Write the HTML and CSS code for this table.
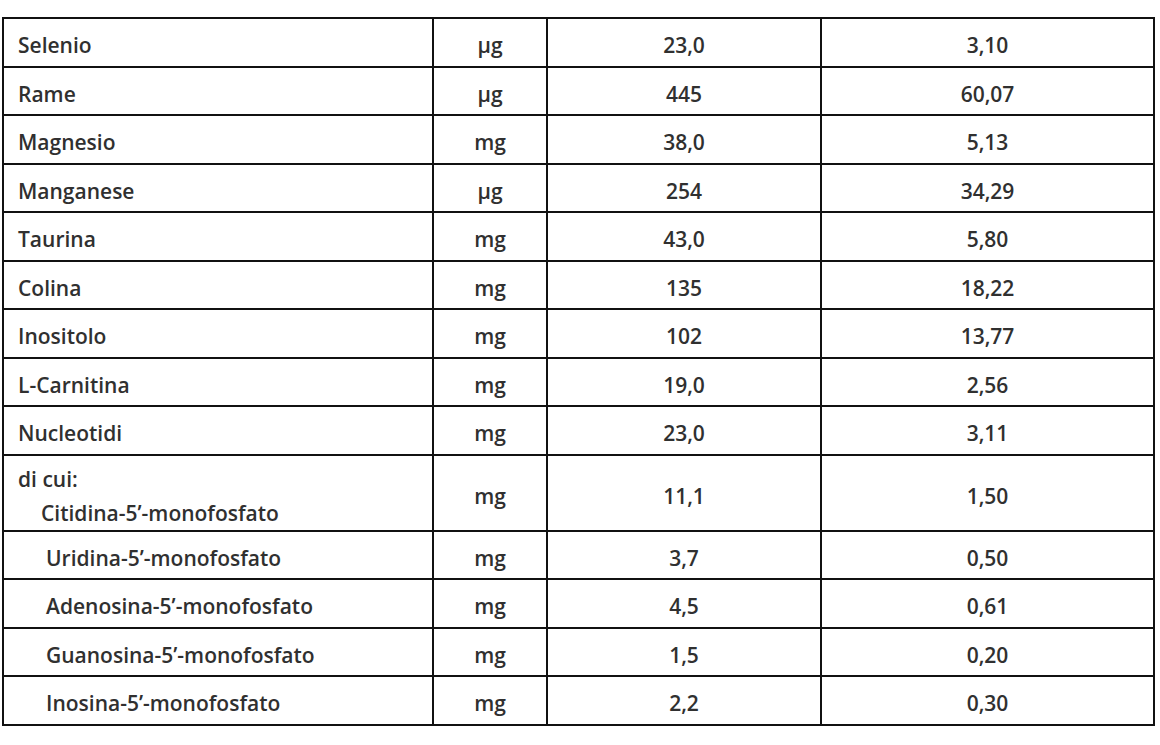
FILE: index.html
```html
<!DOCTYPE html>
<html lang="it">
<head>
<meta charset="utf-8">
<title>Tabella nutrizionale</title>
<link rel="stylesheet" href="styles.css">
</head>
<body>
<table class="nutri">
  <colgroup>
    <col class="c-name">
    <col class="c-unit">
    <col class="c-val">
    <col class="c-val2">
  </colgroup>
  <tbody>
    <tr><td class="name">Selenio</td><td class="num">µg</td><td class="num">23,0</td><td class="num">3,10</td></tr>
    <tr><td class="name">Rame</td><td class="num">µg</td><td class="num">445</td><td class="num">60,07</td></tr>
    <tr><td class="name">Magnesio</td><td class="num">mg</td><td class="num">38,0</td><td class="num">5,13</td></tr>
    <tr><td class="name">Manganese</td><td class="num">µg</td><td class="num">254</td><td class="num">34,29</td></tr>
    <tr><td class="name">Taurina</td><td class="num">mg</td><td class="num">43,0</td><td class="num">5,80</td></tr>
    <tr><td class="name">Colina</td><td class="num">mg</td><td class="num">135</td><td class="num">18,22</td></tr>
    <tr><td class="name">Inositolo</td><td class="num">mg</td><td class="num">102</td><td class="num">13,77</td></tr>
    <tr><td class="name">L-Carnitina</td><td class="num">mg</td><td class="num">19,0</td><td class="num">2,56</td></tr>
    <tr><td class="name">Nucleotidi</td><td class="num">mg</td><td class="num">23,0</td><td class="num">3,11</td></tr>
    <tr class="double">
      <td class="name"><div class="line">di cui:</div><div class="line sub-first">Citidina-5’-monofosfato</div></td>
      <td class="num">mg</td><td class="num">11,1</td><td class="num">1,50</td>
    </tr>
    <tr><td class="name sub">Uridina-5’-monofosfato</td><td class="num">mg</td><td class="num">3,7</td><td class="num">0,50</td></tr>
    <tr><td class="name sub">Adenosina-5’-monofosfato</td><td class="num">mg</td><td class="num">4,5</td><td class="num">0,61</td></tr>
    <tr><td class="name sub">Guanosina-5’-monofosfato</td><td class="num">mg</td><td class="num">1,5</td><td class="num">0,20</td></tr>
    <tr><td class="name sub">Inosina-5’-monofosfato</td><td class="num">mg</td><td class="num">2,2</td><td class="num">0,30</td></tr>
  </tbody>
</table>
</body>
</html>
```
FILE: styles.css
```css
html, body {
  margin: 0;
  padding: 0;
  background: #ffffff;
}

body {
  font-family: "Open Sans", "Noto Sans", sans-serif;
  font-size: 21px;
  font-weight: 600;
  color: #303030;
}

.nutri {
  border-collapse: collapse;
  table-layout: fixed;
  width: 1151px;
  margin: 17px 0 0 2px;
}

.c-name { width: 430px; }
.c-unit { width: 114px; }
.c-val { width: 274px; }
.c-val2 { width: 333px; }

.nutri td {
  border: 2px solid #111111;
  height: 40.5px;
  padding: 6px 0 0 0;
  line-height: 34px;
  vertical-align: middle;
  white-space: nowrap;
}

.nutri .double td {
  height: 68px;
}

.nutri td.name {
  padding-left: 14px;
  text-align: left;
}

.nutri td.sub {
  padding-left: 42px;
}

.line.sub-first {
  padding-left: 23px;
}

.nutri td.num {
  text-align: center;
}
```
